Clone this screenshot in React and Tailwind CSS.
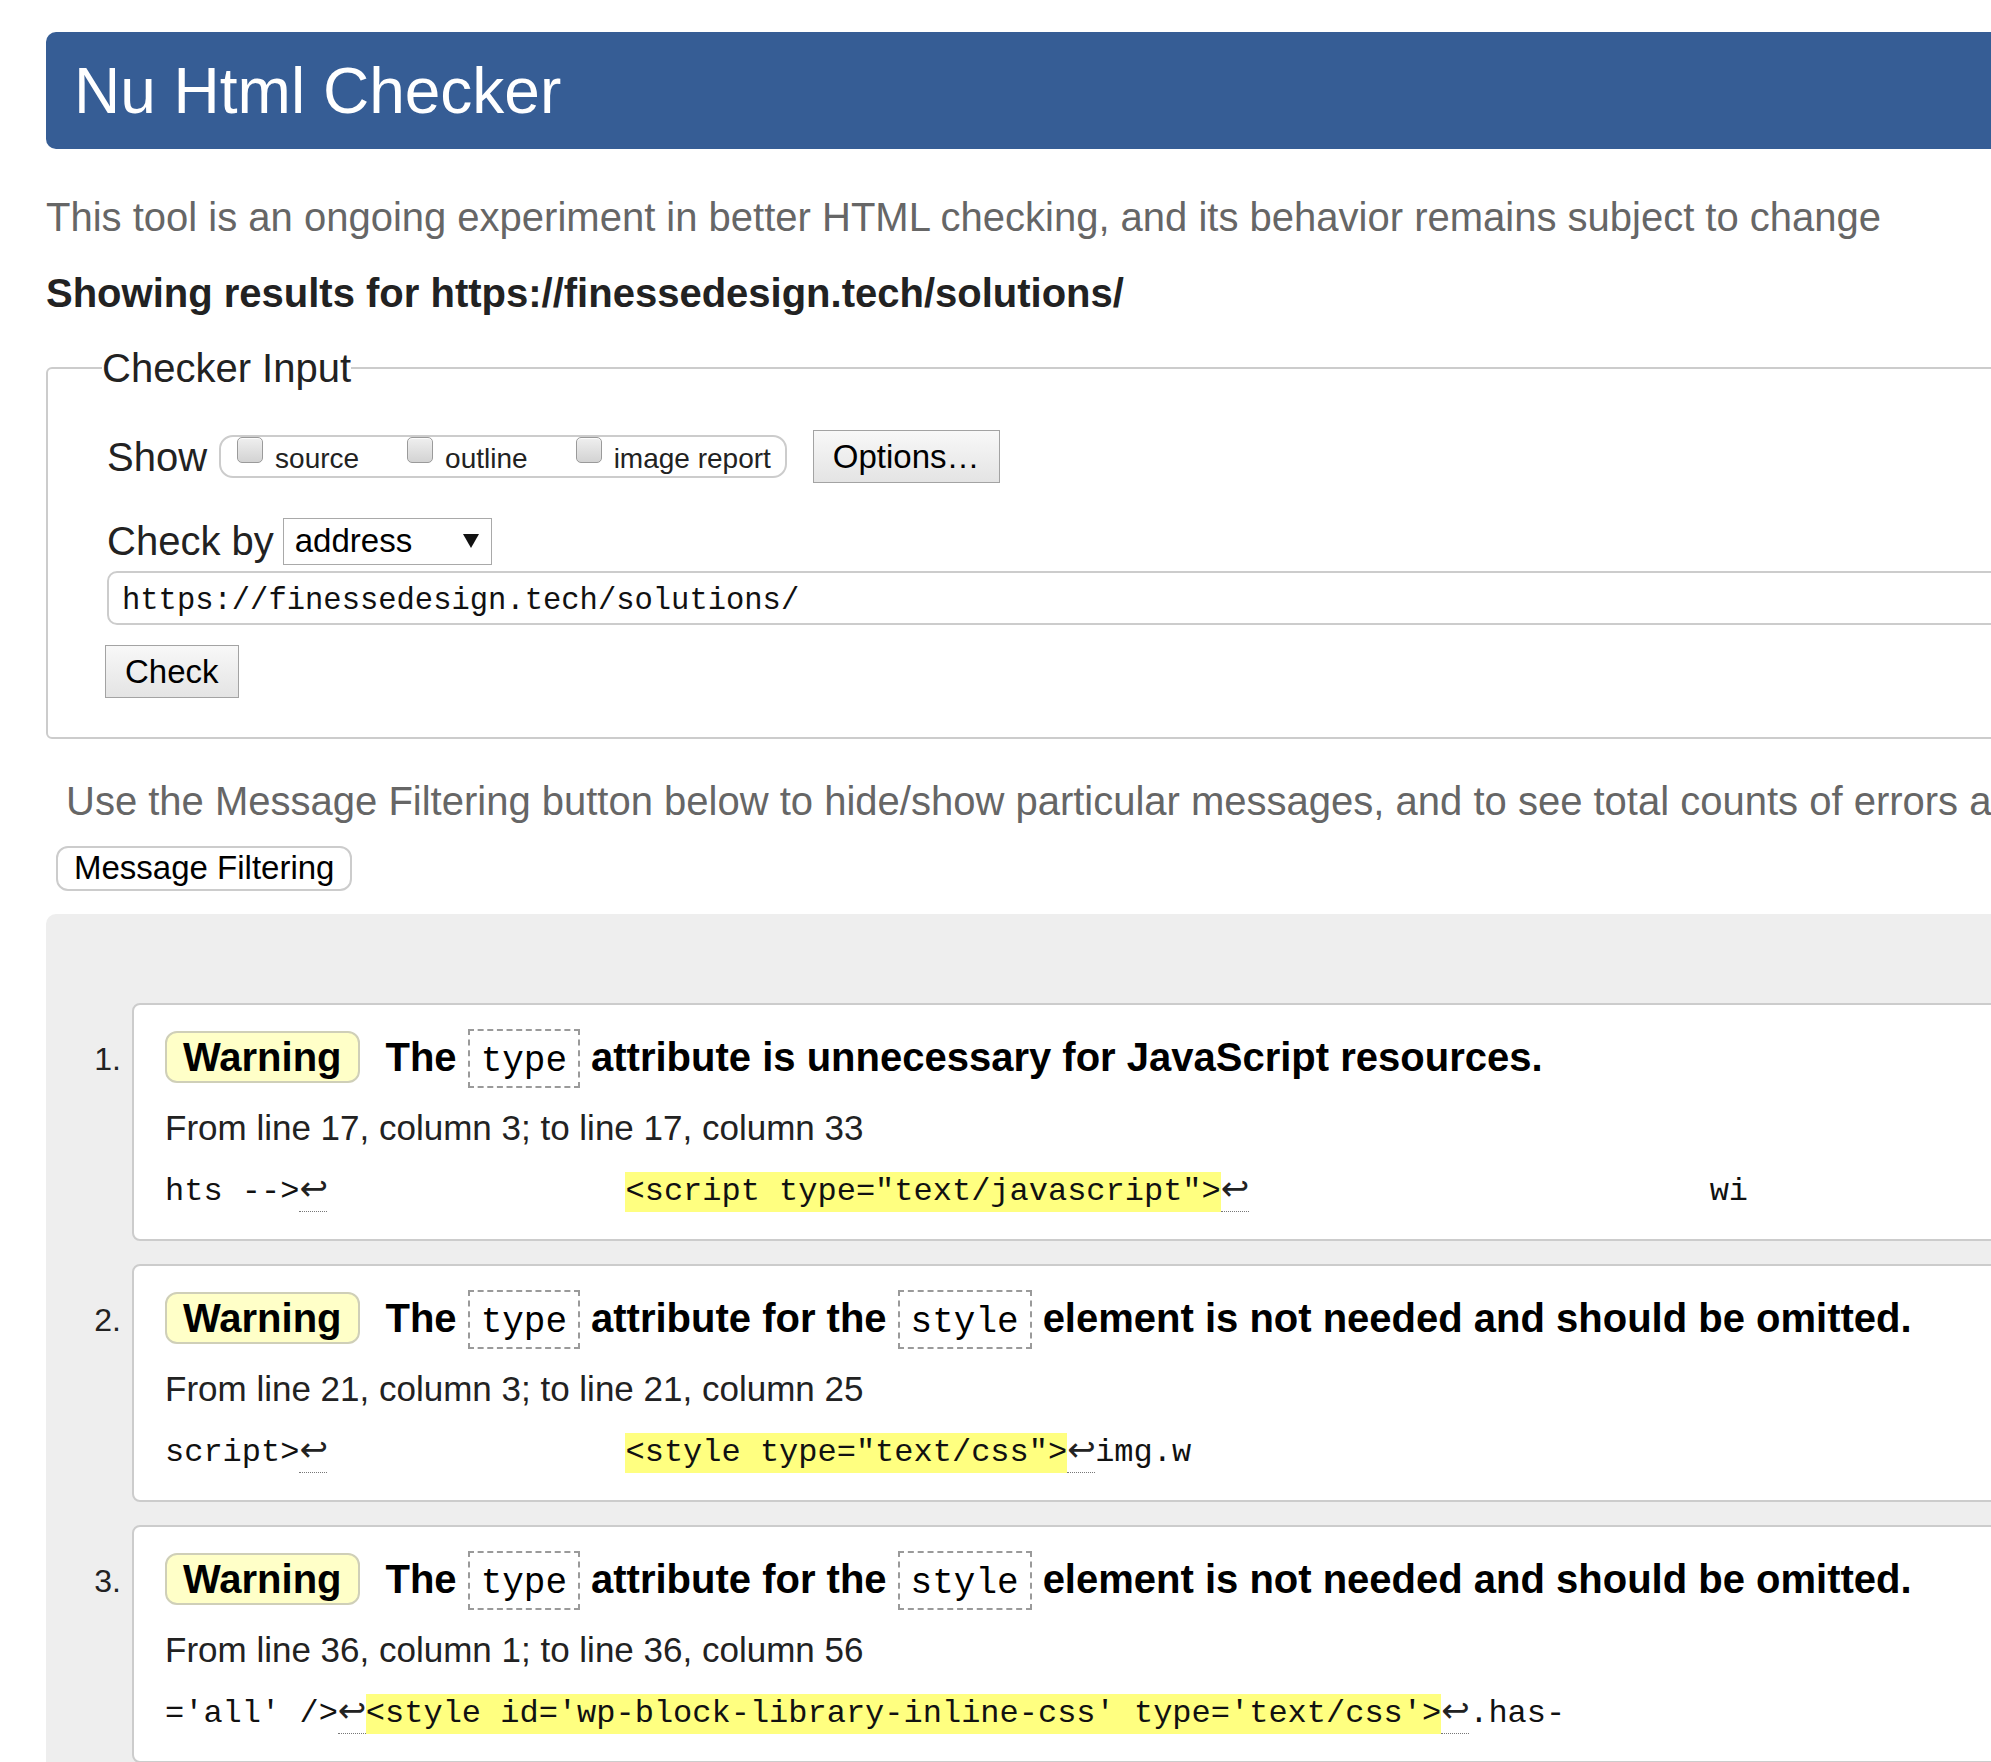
import React from "react";

const mono = "font-['Liberation_Mono','DejaVu_Sans_Mono',monospace]";

const Lf = () => (
  <span className="inline-block w-[28px] border-b border-dotted border-[#777] pb-[6px] text-center align-top font-['DejaVu_Sans',sans-serif] text-[34px] leading-[33px] text-[#222]">
    ↩
  </span>
);

const Code = ({ children }) => (
  <code
    className={`${mono} mx-[11px] inline-block border-2 border-dashed border-[#9a9a9a] px-[11px] pt-[7px] text-[36px] font-normal leading-[48px]`}
  >
    {children}
  </code>
);

const Checkbox = ({ label }) => (
  <div className="flex items-start">
    <span className="h-[26px] w-[26px] rounded-[5px] border border-[#9a9a9a] bg-gradient-to-b from-[#efefef] to-[#d3d3d3] shadow-[inset_0_1px_1px_rgba(255,255,255,0.9)]" />
    <span className="ml-[12px] mt-[5px] text-[28px] leading-[34px] text-[#222]">
      {label}
    </span>
  </div>
);

const Message = ({ n, title, loc, extract }) => (
  <li className="flex items-start">
    <div className="w-[46px] pr-[11px] pt-[29px] text-right text-[32px] leading-[54px] text-[#222]">
      {n}.
    </div>
    <div className="flex-1 rounded-[8px] border-2 border-[#ccc] bg-white pb-[27px] pl-[31px] pt-[24px]">
      <div className="flex items-baseline whitespace-nowrap text-[40px] font-bold leading-[48px] text-black">
        <span className="mr-[26px] inline-block rounded-[12px] border-2 border-[#cfcfb8] bg-[#ffffc8] px-[16px] leading-[48px]">
          Warning
        </span>
        {title}
      </div>
      <p className="mt-[20px] text-[35px] leading-[40px] text-[#222]">{loc}</p>
      <p
        className={`${mono} mt-[24px] h-[40px] whitespace-pre text-[32px] leading-[40px] text-[#111]`}
      >
        {extract}
      </p>
    </div>
  </li>
);

const Hl = ({ children, shift }) => (
  <span
    className={`inline-block bg-[#ffff80] leading-[40px] ${shift ? "ml-[10px]" : ""}`}
  >
    {children}
  </span>
);

const App = () => {
  return (
    <div className="h-[1762px] w-[1991px] overflow-hidden bg-white font-['Liberation_Sans',Arial,sans-serif] text-[#222]">
      <div className="w-[2400px] pl-[46px] pt-[32px]">
        <h1 className="flex h-[117px] items-center rounded-l-[10px] bg-[#365d95] pl-[28px] text-[64px] font-normal leading-none text-white">
          Nu Html Checker
        </h1>

        <p className="mt-[44px] text-[40px] leading-[48px] text-[#666]">
          This tool is an ongoing experiment in better HTML checking, and its
          behavior remains subject to change
        </p>
        <p className="mt-[28px] text-[40px] font-bold leading-[48px] text-[#222]">
          Showing results for https://finessedesign.tech/solutions/
        </p>

        <fieldset className="m-0 mt-[27px] rounded-[6px] border-2 border-[#ccc] pb-[39px] pl-[59px] pt-[38px]">
          <legend className="-ml-[5px] p-0 text-[40px] leading-[48px] text-[#222]">
            Checker Input
          </legend>

          <div className="flex h-[53px] items-center">
            <span className="text-[40px] leading-[48px]">Show</span>
            <div className="ml-[12px] flex h-[43px] items-start gap-[48px] rounded-[14px] border-2 border-[#ccc] pl-[16px] pr-[14px]">
              <Checkbox label="source" />
              <Checkbox label="outline" />
              <Checkbox label="image report" />
            </div>
            <button className="ml-[26px] h-[53px] border border-[#a3a3a3] bg-gradient-to-b from-[#f8f8f8] to-[#e4e4e4] px-[19px] text-[33px] text-black">
              Options…
            </button>
          </div>

          <div className="mt-[34px] flex h-[48px] items-center">
            <span className="text-[40px] leading-[48px]">Check by</span>
            <div className="ml-[9px] flex h-[47px] w-[209px] items-center justify-between border border-[#a9a9a9] bg-white pl-[11px] pr-[12px] text-[33px] text-black">
              <span>address</span>
              <svg width="16" height="14" viewBox="0 0 16 14">
                <path d="M0 0h16L8 14z" fill="#111" />
              </svg>
            </div>
          </div>

          <div
            className={`${mono} mt-[6px] flex h-[54px] items-center rounded-[10px] border-2 border-[#ccc] pl-[13px] pt-[7px] text-[30.5px] leading-none text-[#111]`}
          >
            https://finessedesign.tech/solutions/
          </div>

          <button className="-ml-[2px] mt-[20px] h-[53px] border border-[#a3a3a3] bg-gradient-to-b from-[#f8f8f8] to-[#e4e4e4] px-[19px] text-[33px] text-black">
            Check
          </button>
        </fieldset>

        <p className="mt-[38px] whitespace-nowrap pl-[20px] text-[40px] leading-[48px] text-[#666]">
          Use the Message Filtering button below to hide/show particular
          messages, and to see total counts of errors and warnings.
        </p>
        <button className="ml-[10px] mt-[21px] h-[45px] rounded-[12px] border-2 border-[#ccc] bg-white px-[16px] pb-[3px] text-[33px] leading-none text-black">
          Message Filtering
        </button>

        <div className="mt-[23px] rounded-tl-[10px] bg-[#eeeeee] pb-[40px] pl-[40px] pt-[89px]">
          <ol className="flex flex-col gap-[23px]">
            <Message
              n={1}
              title={
                <>
                  <span>The</span>
                  <Code>type</Code>
                  <span>attribute is unnecessary for JavaScript resources.</span>
                </>
              }
              loc="From line 17, column 3; to line 17, column 33"
              extract={
                <>
                  {"hts -->"}
                  <Lf />
                  {"               "}
                  <Hl shift>{'<script type="text/javascript">'}</Hl>
                  <Lf />
                  {"                        wi"}
                </>
              }
            />
            <Message
              n={2}
              title={
                <>
                  <span>The</span>
                  <Code>type</Code>
                  <span>attribute for the</span>
                  <Code>style</Code>
                  <span>element is not needed and should be omitted.</span>
                </>
              }
              loc="From line 21, column 3; to line 21, column 25"
              extract={
                <>
                  {"script>"}
                  <Lf />
                  {"               "}
                  <Hl shift>{'<style type="text/css">'}</Hl>
                  <Lf />
                  {"img.w"}
                </>
              }
            />
            <Message
              n={3}
              title={
                <>
                  <span>The</span>
                  <Code>type</Code>
                  <span>attribute for the</span>
                  <Code>style</Code>
                  <span>element is not needed and should be omitted.</span>
                </>
              }
              loc="From line 36, column 1; to line 36, column 56"
              extract={
                <>
                  {"='all' />"}
                  <Lf />
                  <Hl>{"<style id='wp-block-library-inline-css' type='text/css'>"}</Hl>
                  <Lf />
                  {".has-"}
                </>
              }
            />
          </ol>
        </div>
      </div>
    </div>
  );
};

export default App;
